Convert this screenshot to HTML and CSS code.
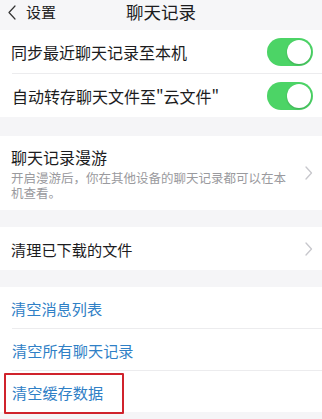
FILE: index.html
```html
<!DOCTYPE html>
<html lang="zh-CN">
<head>
    <meta charset="UTF-8">
    <meta name="viewport" content="width=device-width, initial-scale=1.0">
    <title>聊天记录</title>
    <link rel="stylesheet" href="styles.css">
</head>
<body>
    <div class="page">
        <div class="header">
            <div class="back">
                <svg class="back-icon" width="8" height="15" viewBox="0 0 8 15"><path d="M7 1L1 7.5L7 14" fill="none" stroke="#333" stroke-width="1.2" stroke-linecap="round" stroke-linejoin="round"/></svg>
                <span>设置</span>
            </div>
            <div class="title">聊天记录</div>
        </div>

        <div class="group">
            <div class="row">
                <span class="label">同步最近聊天记录至本机</span>
                <span class="switch"><span class="knob"></span></span>
            </div>
            <div class="row line">
                <span class="label">自动转存聊天文件至"云文件"</span>
                <span class="switch"><span class="knob"></span></span>
            </div>
        </div>

        <div class="group gap-first">
            <div class="row tall">
                <div class="text">
                    <div class="label">聊天记录漫游</div>
                    <div class="desc">开启漫游后，你在其他设备的聊天记录都可以在本机查看。</div>
                </div>
                <svg class="arrow" width="8" height="14" viewBox="0 0 8 14"><path d="M1 1L6.5 7L1 13" fill="none" stroke="#c7c7cc" stroke-width="1.3" stroke-linecap="round" stroke-linejoin="round"/></svg>
            </div>
        </div>

        <div class="group">
            <div class="row">
                <span class="label small">清理已下载的文件</span>
                <svg class="arrow" width="8" height="14" viewBox="0 0 8 14"><path d="M1 1L6.5 7L1 13" fill="none" stroke="#c7c7cc" stroke-width="1.3" stroke-linecap="round" stroke-linejoin="round"/></svg>
            </div>
        </div>

        <div class="group">
            <div class="row short"><span class="label small blue">清空消息列表</span></div>
            <div class="row short line"><span class="label small blue">清空所有聊天记录</span></div>
            <div class="row short line marked">
                <span class="label small blue">清空缓存数据</span>
                <span class="mark"></span>
            </div>
        </div>
    </div>
</body>
</html>
```

FILE: styles.css
```css
/* 聊天记录设置 */
body {
    margin: 0;
    font-family: "Noto Sans CJK SC", "Noto Sans", sans-serif;
    background: #f5f5f7;
    color: #1c1c1e;
}
.page {
    width: 322px;
    height: 419px;
    overflow: hidden;
}
.header {
    height: 30px;
    display: flex;
    align-items: flex-start;
    justify-content: center;
    position: relative;
    background: #f6f6f8;
}
.back {
    position: absolute;
    left: 8px;
    top: 4px;
    display: flex;
    align-items: center;
    gap: 10px;
    font-size: 15px;
    line-height: 16px;
    color: #222;
}
.back-icon {
    margin-top: 1px;
}
.title {
    font-size: 17.5px;
    line-height: 24px;
    color: #1c1c1e;
}
.group {
    background: #fff;
    margin-bottom: 17px;
}
.gap-first {
    margin-top: 19px;
}
.row {
    height: 43px;
    display: flex;
    align-items: center;
    justify-content: space-between;
    padding: 0 9px 0 11px;
    position: relative;
}
.row.line {
    border-top: 1px solid #ececee;
    margin-left: 12px;
    padding-left: 0;
}
.row.short {
    height: 41px;
}
.row.tall {
    height: 74px;
}
.label {
    font-size: 16px;
    line-height: 20px;
    white-space: nowrap;
}
.label.small {
    font-size: 15.2px;
}
.blue {
    color: #2f80c6;
}
.text {
    width: 284px;
    margin-top: 1px;
}
.desc {
    margin-top: 3px;
    font-size: 12.5px;
    line-height: 15px;
    color: #9a9a9e;
}
.switch {
    width: 46px;
    height: 28px;
    border-radius: 14px;
    background: #4cd466;
    position: relative;
}
.knob {
    position: absolute;
    right: 2px;
    top: 2px;
    width: 24px;
    height: 24px;
    border-radius: 50%;
    background: #fff;
    box-shadow: 0 1px 2px rgba(0, 0, 0, 0.2);
}
.mark {
    position: absolute;
    left: -8px;
    top: 2px;
    width: 116px;
    height: 37px;
    border: 2px solid #d0232c;
    border-radius: 1px;
}
```
